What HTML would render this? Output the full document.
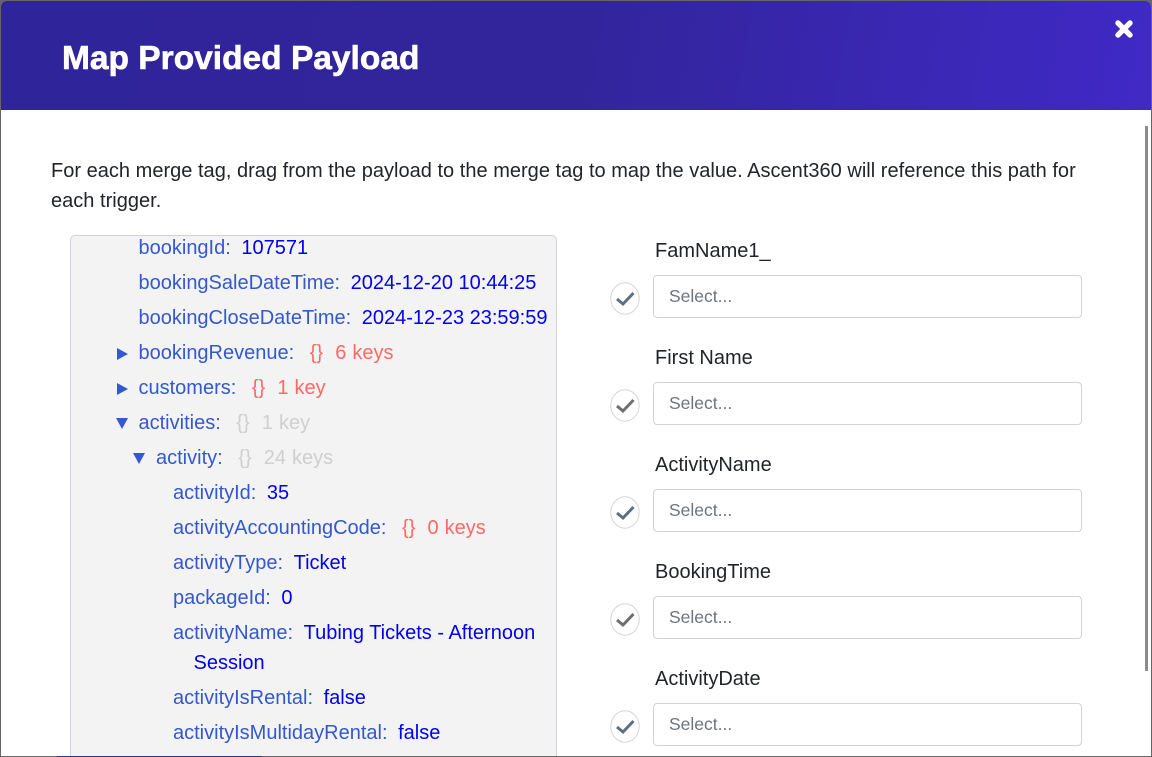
<!DOCTYPE html>
<html>
<head>
<meta charset="utf-8">
<style>
html,body{margin:0;padding:0;width:1152px;height:757px;overflow:hidden;background:#fff;font-family:"Liberation Sans",sans-serif}
#frame{position:absolute;left:0;top:0;width:1152px;height:757px;overflow:hidden;background:#666}
#modal{position:absolute;left:1px;top:1px;width:1150px;height:755px;background:#fff;border-radius:5px 5px 0 0;overflow:hidden}
#head{position:absolute;left:0;top:0;width:1150px;height:109px;background:linear-gradient(100deg,#30249a 0%,#32259b 50%,#4029c6 100%)}
#title{position:absolute;left:61px;top:38px;font-size:33.5px;line-height:40px;font-weight:700;color:#fff;white-space:nowrap;-webkit-text-stroke:.6px #fff}
#close{position:absolute;left:1113px;top:18px}
#bar{position:absolute;left:1144px;top:125px;width:3px;height:545px;background:#8c8c8c}
#intro{position:absolute;left:50px;top:155px;width:1050px;font-size:20px;line-height:30px;color:#212529;letter-spacing:.017px}
#tree{position:absolute;left:69px;top:234px;width:485px;height:530px;background:#f3f3f3;border:1px solid #ced4da;border-radius:5px;overflow:hidden}
.r{position:absolute;white-space:nowrap;font-size:20px;line-height:30px;color:#3358cf}
.v{color:#0000ee;margin-left:5px}
.o{color:#ff6868;margin-left:10px;word-spacing:.5px}
.g{color:#cfcfcf;margin-left:10px;word-spacing:.5px}
.a{position:absolute;width:0;height:0}
.ar{border-top:6px solid transparent;border-bottom:6px solid transparent;border-left:11px solid #3358cf}
.ad{border-left:6px solid transparent;border-right:6px solid transparent;border-top:11px solid #3358cf}
.lab{position:absolute;left:654px;font-size:20px;line-height:30px;color:#212529;white-space:nowrap}
.sel{position:absolute;left:652px;width:427px;height:41px;border:1px solid #ced4da;border-radius:4px;background:#fff;box-sizing:content-box;font-size:17.5px;line-height:40px;color:#6c757d;text-indent:15px}
.chk{position:absolute;left:609px}
#strip{position:absolute;left:57px;top:755px;width:205px;height:2px;background:#2a3a7a}
</style>
</head>
<body>
<div id="frame">
<div id="strip"></div>
<div id="modal">
  <div id="head">
    <div id="title">Map Provided Payload</div>
    <svg id="close" width="20" height="20" viewBox="0 0 20 20"><path d="M4 4L16 16M16 4L4 16" stroke="#fff" stroke-width="5.4" stroke-linecap="round" fill="none"/></svg>
  </div>
  <div id="bar"></div>
  <div id="intro">For each merge tag, drag from the payload to the merge tag to map the value. Ascent360 will reference this path for each trigger.</div>
  <div id="tree">
    <div class="r" style="left:67.5px;top:-3px">bookingId: <span class="v">107571</span></div>
    <div class="r" style="left:67.5px;top:32px">bookingSaleDateTime: <span class="v">2024-12-20 10:44:25</span></div>
    <div class="r" style="left:67.5px;top:67px">bookingCloseDateTime: <span class="v">2024-12-23 23:59:59</span></div>
    <div class="a ar" style="left:46px;top:112px"></div>
    <div class="r" style="left:67.5px;top:102px">bookingRevenue: <span class="o">{}&nbsp; 6 keys</span></div>
    <div class="a ar" style="left:46px;top:147px"></div>
    <div class="r" style="left:67.5px;top:137px">customers: <span class="o">{}&nbsp; 1 key</span></div>
    <div class="a ad" style="left:45px;top:182px"></div>
    <div class="r" style="left:67.5px;top:172px">activities: <span class="g">{}&nbsp; 1 key</span></div>
    <div class="a ad" style="left:62px;top:217px"></div>
    <div class="r" style="left:85px;top:207px">activity: <span class="g">{}&nbsp; 24 keys</span></div>
    <div class="r" style="left:102px;top:242px">activityId: <span class="v">35</span></div>
    <div class="r" style="left:102px;top:277px">activityAccountingCode: <span class="o">{}&nbsp; 0 keys</span></div>
    <div class="r" style="left:102px;top:312px">activityType: <span class="v">Ticket</span></div>
    <div class="r" style="left:102px;top:347px">packageId: <span class="v">0</span></div>
    <div class="r" style="left:102px;top:382px">activityName: <span class="v">Tubing Tickets - Afternoon</span></div>
    <div class="r" style="left:122.5px;top:412px"><span class="v" style="margin:0">Session</span></div>
    <div class="r" style="left:102px;top:447px">activityIsRental: <span class="v">false</span></div>
    <div class="r" style="left:102px;top:482px">activityIsMultidayRental: <span class="v">false</span></div>
  </div>

  <div class="lab" style="top:235px">FamName1_</div>
  <div class="sel" style="top:274px">Select...</div>
  <svg class="chk" style="top:281px" width="30" height="33" viewBox="0 0 30 33"><ellipse cx="15" cy="16.5" rx="14.2" ry="15.7" fill="#fff" stroke="#d5d5d5"/><path d="M7 17L13 22L23.5 11" fill="none" stroke="#5f6f82" stroke-width="3"/></svg>

  <div class="lab" style="top:342px">First Name</div>
  <div class="sel" style="top:381px">Select...</div>
  <svg class="chk" style="top:388px" width="30" height="33" viewBox="0 0 30 33"><ellipse cx="15" cy="16.5" rx="14.2" ry="15.7" fill="#fff" stroke="#d5d5d5"/><path d="M7 17L13 22L23.5 11" fill="none" stroke="#6e6e6e" stroke-width="3"/></svg>

  <div class="lab" style="top:449px">ActivityName</div>
  <div class="sel" style="top:488px">Select...</div>
  <svg class="chk" style="top:495px" width="30" height="33" viewBox="0 0 30 33"><ellipse cx="15" cy="16.5" rx="14.2" ry="15.7" fill="#fff" stroke="#d5d5d5"/><path d="M7 17L13 22L23.5 11" fill="none" stroke="#5f6f82" stroke-width="3"/></svg>

  <div class="lab" style="top:556px">BookingTime</div>
  <div class="sel" style="top:595px">Select...</div>
  <svg class="chk" style="top:602px" width="30" height="33" viewBox="0 0 30 33"><ellipse cx="15" cy="16.5" rx="14.2" ry="15.7" fill="#fff" stroke="#d5d5d5"/><path d="M7 17L13 22L23.5 11" fill="none" stroke="#6e6e6e" stroke-width="3"/></svg>

  <div class="lab" style="top:663px">ActivityDate</div>
  <div class="sel" style="top:702px">Select...</div>
  <svg class="chk" style="top:709px" width="30" height="33" viewBox="0 0 30 33"><ellipse cx="15" cy="16.5" rx="14.2" ry="15.7" fill="#fff" stroke="#d5d5d5"/><path d="M7 17L13 22L23.5 11" fill="none" stroke="#5f6f82" stroke-width="3"/></svg>
</div>
</div>
</body>
</html>
